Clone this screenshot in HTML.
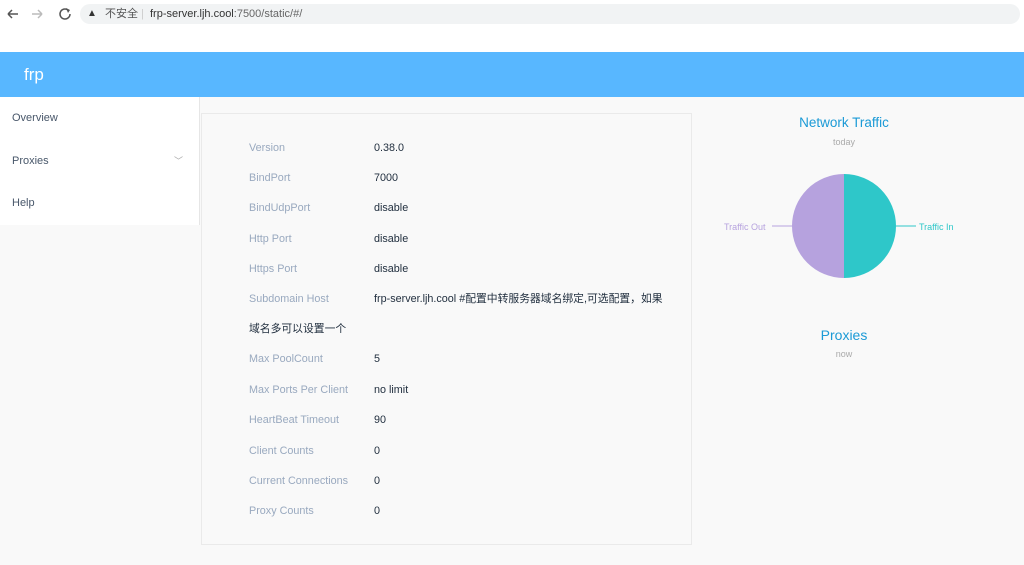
<!DOCTYPE html><html><head><meta charset="utf-8"><style>
body{margin:0;width:1024px;height:565px;overflow:hidden;background:#f9f9f9;font-family:"Liberation Sans","Noto Sans CJK SC",sans-serif;position:relative}
.top{position:absolute;left:0;top:0;width:1024px;height:52px;background:#fff}
.pill{position:absolute;left:80px;top:4px;width:940px;height:20px;border-radius:10px;background:#f1f3f4;font-size:11px;color:#333;line-height:20px}
.hdr{position:absolute;left:0;top:52px;width:1024px;height:45px;background:#58b7ff;color:#fff;font-size:17px;line-height:45px}
.side{position:absolute;left:0;top:97px;width:199px;height:128px;background:#fff;border-right:1px solid #e6e6e6;font-size:11px;color:#48576a}
.side div{height:42.5px;line-height:42.5px;padding-left:12px;position:relative}
.card{position:absolute;left:201px;top:113px;width:489px;height:430px;border:1px solid #eaeaea;background:#f9f9f9}
.r{position:absolute;font-size:10.8px;line-height:14px}
.l{left:47px;color:#99a9bf}.v{left:172px;color:#1f2d3d}
.t{position:absolute;text-align:center;width:200px;left:744px}
</style></head><body>
<div class="top">
<svg style="position:absolute;left:6px;top:7px" width="70" height="14"><path d="M2 7h10M2 7l4-4M2 7l4 4" stroke="#555" stroke-width="1.5" fill="none"/><path d="M26 7h10M36 7l-4-4M36 7l-4 4" stroke="#bbb" stroke-width="1.5" fill="none"/><path d="M62 3a5 5 0 1 0 2 4" stroke="#555" stroke-width="1.5" fill="none"/><path d="M60 1l4 2-2 3" fill="#555"/></svg>
<div class="pill"><span style="position:absolute;left:7px;font-size:10px">▲</span><span style="position:absolute;left:25px;color:#555">不安全</span><span style="position:absolute;left:61px;color:#ccc">|</span><span style="position:absolute;left:70px">frp-server.ljh.cool<span style="color:#666">:7500/static/#/</span></span></div>
</div>
<div class="hdr"><span style="position:absolute;left:24px">frp</span></div>
<div class="side"><div>Overview</div><div>Proxies<span style="position:absolute;right:16px;color:#aaa;font-size:9px">﹀</span></div><div>Help</div></div>
<div class="card">
<div class="r l" style="top:27px">Version</div><div class="r v" style="top:27px">0.38.0</div>
<div class="r l" style="top:57px">BindPort</div><div class="r v" style="top:57px">7000</div>
<div class="r l" style="top:87px">BindUdpPort</div><div class="r v" style="top:87px">disable</div>
<div class="r l" style="top:118px">Http Port</div><div class="r v" style="top:118px">disable</div>
<div class="r l" style="top:148px">Https Port</div><div class="r v" style="top:148px">disable</div>
<div class="r l" style="top:178px">Subdomain Host</div><div class="r v" style="top:178px">frp-server.ljh.cool #配置中转服务器域名绑定,可选配置，如果</div>
<div class="r v" style="top:208px;left:47px">域名多可以设置一个</div>
<div class="r l" style="top:238px">Max PoolCount</div><div class="r v" style="top:238px">5</div>
<div class="r l" style="top:269px">Max Ports Per Client</div><div class="r v" style="top:269px">no limit</div>
<div class="r l" style="top:299px">HeartBeat Timeout</div><div class="r v" style="top:299px">90</div>
<div class="r l" style="top:330px">Client Counts</div><div class="r v" style="top:330px">0</div>
<div class="r l" style="top:360px">Current Connections</div><div class="r v" style="top:360px">0</div>
<div class="r l" style="top:390px">Proxy Counts</div><div class="r v" style="top:390px">0</div>
</div>
<div class="t" style="top:115px;font-size:13.5px;color:#1b9ad6">Network Traffic</div>
<div class="t" style="top:137px;font-size:9px;color:#aaa">today</div>
<svg style="position:absolute;left:700px;top:160px" width="300" height="130">
<path d="M144 14A52 52 0 0 1 144 118Z" fill="#2ec7c9"/><path d="M144 14A52 52 0 0 0 144 118Z" fill="#b6a2de"/>
<line x1="196" y1="66" x2="216" y2="66" stroke="#2ec7c9"/><line x1="72" y1="66" x2="92" y2="66" stroke="#b6a2de"/>
<text x="219" y="70" font-size="9" fill="#2ec7c9" font-family="Liberation Sans">Traffic In</text>
<text x="24" y="70" font-size="9" fill="#b6a2de" font-family="Liberation Sans">Traffic Out</text></svg>
<div class="t" style="top:327px;font-size:14px;color:#1b9ad6">Proxies</div>
<div class="t" style="top:349px;font-size:9px;color:#aaa">now</div>
</body></html>
